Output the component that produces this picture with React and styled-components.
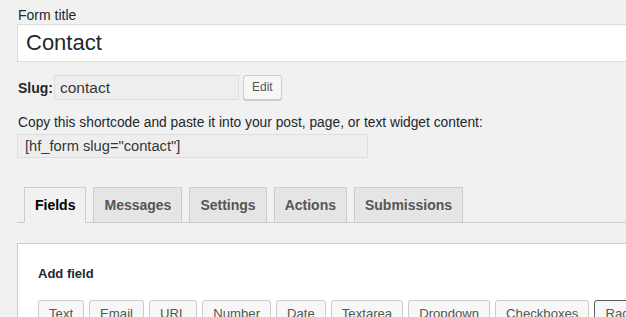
import React from 'react';
import styled, { createGlobalStyle } from 'styled-components';

const GlobalStyle = createGlobalStyle`
  html, body {
    margin: 0;
    padding: 0;
    background: #f1f1f1;
    overflow: hidden;
  }
  body {
    font-family: "Liberation Sans", Arial, sans-serif;
    color: #444;
  }
`;

const Page = styled.div`
  box-sizing: border-box;
  padding: 6px 0 0 17px;
  width: 626px;
  height: 317px;
  overflow: hidden;
`;

const Label = styled.div`
  font-size: 14px;
  line-height: 18px;
  color: #23282d;
  padding-left: 1px;
`;

const TitleInput = styled.div`
  box-sizing: border-box;
  width: 700px;
  height: 38px;
  background: #fff;
  border: 1px solid #ddd;
  box-shadow: inset 0 1px 2px rgba(0, 0, 0, 0.04);
  font-size: 22px;
  line-height: 36px;
  padding-left: 8px;
  color: #23282d;
`;

const SlugRow = styled.div`
  display: flex;
  align-items: center;
  margin-top: 13px;
  height: 25px;
`;

const SlugLabel = styled.strong`
  font-size: 14px;
  color: #23282d;
  padding-left: 1px;
  width: 36px;
`;

const ReadonlyBox = styled.div`
  box-sizing: border-box;
  width: ${(p) => p.$w}px;
  height: ${(p) => p.$h}px;
  background: #eee;
  border: 1px solid #ddd;
  font-size: ${(p) => p.$size}px;
  line-height: ${(p) => p.$h - 2}px;
  padding-left: ${(p) => p.$pad}px;
  color: #32373c;
`;

const SmallButton = styled.div`
  box-sizing: border-box;
  margin-left: 4px;
  margin-top: -1px;
  height: 25px;
  padding: 0 8px;
  border: 1px solid #ccc;
  border-radius: 3px;
  background: #f7f7f7;
  box-shadow: 0 1px 0 #ccc;
  font-size: 12px;
  line-height: 23px;
  color: #555;
`;

const Hint = styled.div`
  margin-top: 15px;
  font-size: 13.8px;
  line-height: 16px;
  color: #23282d;
  padding-left: 1px;
  white-space: nowrap;
`;

const ShortcodeWrap = styled.div`
  margin-top: 3px;
`;

const TabNav = styled.div`
  display: flex;
  width: 700px;
  margin-top: 29px;
  border-bottom: 1px solid #ccc;
  padding-left: 7px;
`;

const Tab = styled.div`
  margin-right: 7px;
  margin-bottom: -1px;
  padding: 5px 10px;
  font-size: 14px;
  font-weight: bold;
  line-height: 24px;
  border: 1px solid #ccc;
  border-bottom-color: ${(p) => (p.$active ? '#f1f1f1' : '#ccc')};
  background: ${(p) => (p.$active ? '#f1f1f1' : '#e5e5e5')};
  color: ${(p) => (p.$active ? '#000' : '#555')};
`;

const Panel = styled.div`
  width: 700px;
  margin-top: 20px;
  background: #fff;
  border: 1px solid #ccc;
  padding: 20px 20px 40px;
`;

const PanelTitle = styled.div`
  font-size: 13px;
  font-weight: bold;
  line-height: 20px;
  color: #23282d;
`;

const FieldButtons = styled.div`
  display: flex;
  gap: 5px;
  margin-top: 16px;
  white-space: nowrap;
`;

const FieldButton = styled.div`
  box-sizing: border-box;
  height: 28px;
  padding: 0 10px;
  border: 1px solid ${(p) => (p.$focus ? '#5b5b5b' : '#ccc')};
  border-radius: 3px;
  background: #f7f7f7;
  box-shadow: 0 1px 0 #ccc;
  font-size: 13.15px;
  line-height: 26px;
  color: #555;
`;

const tabs = ['Fields', 'Messages', 'Settings', 'Actions', 'Submissions'];
const fields = ['Text', 'Email', 'URL', 'Number', 'Date', 'Textarea', 'Dropdown', 'Checkboxes', 'Radio buttons'];

export default function App() {
  return (
    <Page>
      <GlobalStyle />
      <Label>Form title</Label>
      <TitleInput>Contact</TitleInput>
      <SlugRow>
        <SlugLabel>Slug:</SlugLabel>
        <ReadonlyBox $w={185} $h={25} $size={15.5} $pad={5}>contact</ReadonlyBox>
        <SmallButton>Edit</SmallButton>
      </SlugRow>
      <Hint>Copy this shortcode and paste it into your post, page, or text widget content:</Hint>
      <ShortcodeWrap>
        <ReadonlyBox $w={351} $h={24} $size={14.7} $pad={7}>[hf_form slug="contact"]</ReadonlyBox>
      </ShortcodeWrap>
      <TabNav>
        {tabs.map((t, i) => (
          <Tab key={t} $active={i === 0}>{t}</Tab>
        ))}
      </TabNav>
      <Panel>
        <PanelTitle>Add field</PanelTitle>
        <FieldButtons>
          {fields.map((f) => (
            <FieldButton key={f} $focus={f === 'Radio buttons'}>{f}</FieldButton>
          ))}
        </FieldButtons>
      </Panel>
    </Page>
  );
}
